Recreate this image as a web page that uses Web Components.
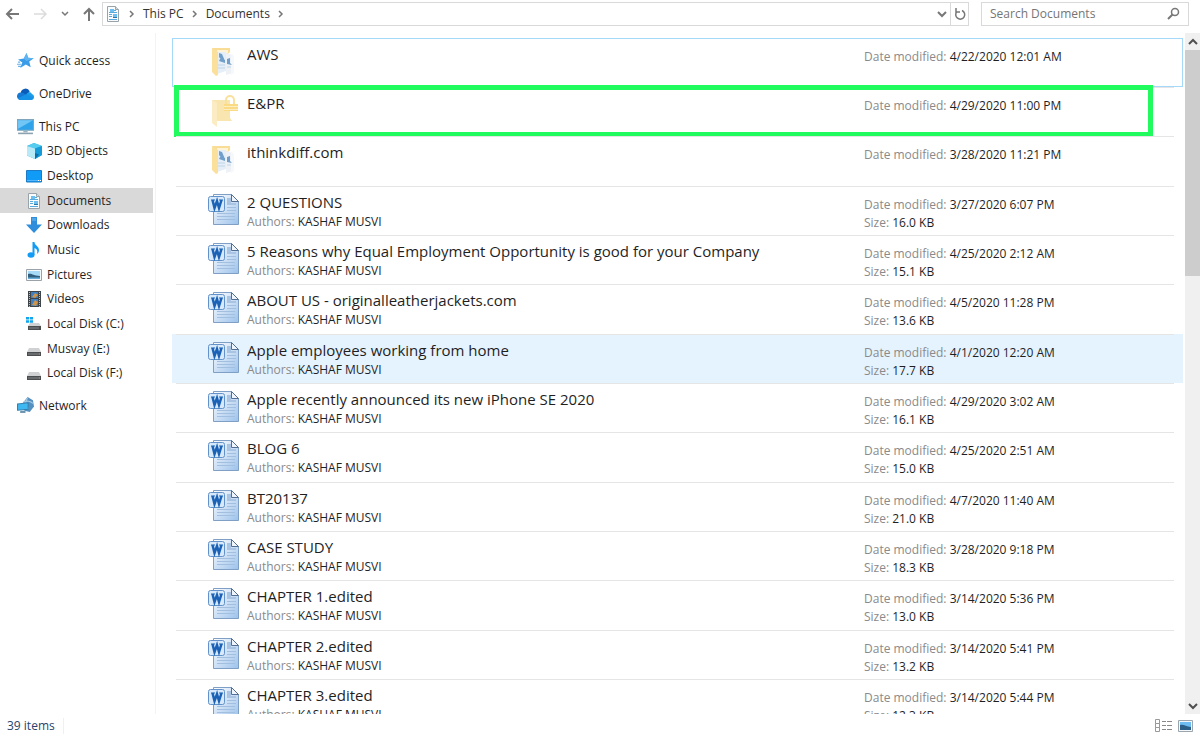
<!DOCTYPE html>
<html lang="en">
<head>
<meta charset="utf-8">
<meta name="viewport" content="width=device-width, initial-scale=1">
<title>Documents</title>
<style>
  * { box-sizing: border-box; }
  body {
    --line: #e5e5e5;
    --text: #1f1f1f;
    --muted: #8a8a8a;
    margin: 0;
    height: 100vh;
    display: flex;
    flex-direction: column;
    overflow: hidden;
    background: #fff;
    color: var(--text);
    font: 12px/18px "Open Sans", "Noto Sans", sans-serif;
  }
  main {
    flex: 1;
    min-height: 0;
    display: flex;
    margin-top: 7px;
  }
</style>
</head>
<body>
<address-bar></address-bar>
<main>
  <side-nav>
    <nav-item icon="star">Quick access</nav-item>
    <nav-item icon="cloud">OneDrive</nav-item>
    <nav-group>
      <nav-item icon="pc">This PC</nav-item>
      <nav-item icon="cube" child>3D Objects</nav-item>
      <nav-item icon="desktop" child>Desktop</nav-item>
      <nav-item icon="doc" child current>Documents</nav-item>
      <nav-item icon="download" child>Downloads</nav-item>
      <nav-item icon="music" child>Music</nav-item>
      <nav-item icon="picture" child>Pictures</nav-item>
      <nav-item icon="video" child>Videos</nav-item>
      <nav-item icon="windisk" child>Local Disk (C:)</nav-item>
      <nav-item icon="disk" child>Musvay (E:)</nav-item>
      <nav-item icon="disk" child>Local Disk (F:)</nav-item>
    </nav-group>
    <nav-item icon="network">Network</nav-item>
  </side-nav>
  <file-list></file-list>
  <scroll-bar></scroll-bar>
</main>
<status-bar>39 items</status-bar>

<script>
const ICONS = {
  star: `<svg viewBox="0 0 16 16"><path d="M9 1l1.500 4.500 5.300.3-4.300 3.200 1.400 5.400-4.600-2.600L3 15l2-5.200L1 7l5.400-1z" fill="#3a9be8"/><path d="M9 1l1.500 4.500 5.300.3-7 2.700L6.400 6z" fill="#5fb4f2"/><path d="M0 11.500h4M1 13.500h3M1 9.500h2" stroke="#66b3ec"/></svg>`,
  cloud: `<svg viewBox="0 0 16 16"><path d="M3.500 7A4.500 4.500 0 0 1 12 6l-4 5z" fill="#0a5cb8"/><path d="M3.500 7C1.500 7 0 8.500 0 10.500S1.500 14 3.500 14L10 10 6 7.500z" fill="#1478d4"/><path d="M9 8.500C10 6.500 13 6 14 8.500c3 1 2.500 5-.5 5.500z" fill="#1b9de8"/><path d="M1 12.500L9 8.500l6.500 3.500c0 1-1 2-2.500 2H3.500c-1 0-2-.5-2.500-1.500z" fill="#1591e5"/></svg>`,
  pc: `<svg viewBox="0 0 16 16"><path d="M.5 1.500h15v10H.5z" fill="#2fa3ea" stroke="#7fa6bd"/><path d="M1 2h14L1 10z" fill="#72c6f5"/><path d="M6 12h4v1.500H6z" fill="#9db2bf"/><path d="M1 14.500h14" stroke="#8ba2b0" stroke-width="1.500"/></svg>`,
  cube: `<svg viewBox="0 0 16 16"><path d="M8 0l8 3v9l-7 4-8-3.500V3z" fill="#28aee4"/><path d="M8 0l8 3-7 2.500L1 3z" fill="#56ccef"/><path d="M1 3l8 2.500V16l-8-3.500z" fill="#b8e9f6"/><path d="M9 5.500L16 3v9l-7 4z" fill="#159bd8"/><path d="M9 10l4 1.500-4 4.500z" fill="#0b6fab"/></svg>`,
  desktop: `<svg viewBox="0 0 16 16"><path d="M.5 2.500h15v11.500H.5z" fill="#109bf7" stroke="#1c7bc4"/><path d="M1 12.500h14" stroke="#55b8ff"/><path d="M12 12.500h1M14 12.500h1" stroke="#fff"/></svg>`,
  doc: `<svg viewBox="0 0 16 16"><path d="M2.500.5h8l3 3v12h-11z" fill="#f9fbfc" stroke="#99a4aa"/><path d="M10.500.5v3h3" fill="#d5dce0" stroke="#99a4aa"/><path d="M5 3h4v4H5zM8 8h4v4H8z" fill="#6cbff0"/><path d="M4 6.500h8M4 8.500h3M4 10.500h3M4 13.500h8M9 4.500h2" stroke="#5aa9dc"/><path d="M8 11.500h4" stroke="#2874aa"/></svg>`,
  download: `<svg viewBox="0 0 16 16"><path d="M5 0h6v7.500h5L8 16 0 7.500h5z" fill="#2f8edb"/><path d="M6 1h4v3H6z" fill="#51a5e6"/></svg>`,
  music: `<svg viewBox="0 0 16 16"><ellipse cx="5" cy="13" rx="3.500" ry="2.800" fill="#149cf4"/><path d="M6.500 0h2c0 3.500 4.500 4 4.500 8 0 2-1 3-2 4 1-4-.5-5-2.500-6v7h-2z" fill="#149cf4"/></svg>`,
  picture: `<svg viewBox="0 0 16 16"><path d="M.5 2.500h15v11H.5z" fill="#f5f7f9" stroke="#9aa2aa"/><path d="M2 4h12v8H2z" fill="#a6daf7"/><path d="M2 7c4-1 5 2 12 2v3H2z" fill="#315f7e"/><path d="M2 10.500h12V12H2z" fill="#6aaedb"/></svg>`,
  video: `<svg viewBox="0 0 16 16"><path d="M2 0h13v16H2z" fill="#3d444a"/><path d="M5 1h7v6H5zM5 8h7v7H5z" fill="#3d7fc4"/><path d="M6 6l3-4 3 2-3 3zM6 14l3-5 3 2-2 4z" fill="#d09448"/><path d="M3.500 1v15M13.500 1v15" stroke="#b9bec2" stroke-dasharray="1 1"/></svg>`,
  disk: `<svg viewBox="0 0 16 16"><path d="M3 7h10l2 4H1z" fill="#cfd1d2"/><path d="M1 11h14v4H1z" fill="#4b4d4f"/><path d="M2 13h11" stroke="#85898c"/><path d="M13 13h1" stroke="#77e07a"/></svg>`,
  windisk: `<svg viewBox="0 0 16 16"><path d="M4 7h9l2 3H2z" fill="#cfd1d2"/><path d="M2 10h13v4H2z" fill="#4b4d4f"/><path d="M3 12h10" stroke="#85898c"/><path d="M0 1h3v2.500H0zM3.700 1H7v2.500H3.700zM0 4.200h3v2.600H0zM3.700 4.200H7v2.600H3.700z" fill="#12a5ee"/></svg>`,
  network: `<svg viewBox="0 0 16 16"><path d="M10 0l5 3 1 6-4 5-5-1-2-7z" fill="#5590c0"/><path d="M10 1c-3 3-2 7 1 10M6 5c3-2 7-1 9 1" stroke="#a9cde6" fill="none"/><path d="M.5 6.500l10-1v6l-10 1z" fill="#3fb8f2" stroke="#3580b0"/><path d="M3 13h5v2H3z" fill="#6b93ad"/></svg>`,
  folder: `<svg viewBox="0 0 31 34"><path d="M4 3h18v4l-3 3H8z" fill="#f9dc95"/><path d="M9 5h11v3H9z" fill="#fff4d8"/><path d="M9 7h9v19l-9 3z" fill="#e6eff7"/><path d="M18 8l7 2v18l-7 2z" fill="#eef2f6"/><path d="M23 10l3 1v17l-3 2z" fill="#f7f8f9"/><path d="M11 8l3 1 3 7-2 1-4-5zM12 14l5 1v3l-6-2zM19 14l3-1v5l2 2-5-1z" fill="#6f9fca"/><path d="M10 20h7M19 22h4M10 23h7" stroke="#c0d5e8"/><path d="M4 3l6 4v23l-2 1-4-4z" fill="#fbe09c"/></svg>`,
  locked: `<svg viewBox="0 0 31 34"><path d="M4 6h18v18l2 3H10l-6 1z" fill="#f9e5b0"/><path d="M4 6l5 3v24l-5-4z" fill="#fbecc4"/><path d="M18 11V6a4 4 0 0 1 8 0v5" fill="none" stroke="#f9e19b" stroke-width="2"/><path d="M16 10h14v7H16z" fill="#fadb83"/><path d="M16 12.500h14M16 15.500h14" stroke="#fdeec2"/></svg>`,
  word: `<svg viewBox="0 0 31 34"><defs><linearGradient id="p" x1="0" y1="0" x2="1" y2="1"><stop stop-color="#fff"/><stop offset="1" stop-color="#9cc2ec"/></linearGradient></defs>
    <path d="M5.500 1.500h18l7 7v23h-25z" fill="url(#p)" stroke="#7f9fc4"/><path d="M23.500 1.500v7h7z" fill="#eef5fc" stroke="#526f93"/>
    <path d="M19 5h4v5h5v2h-9z" fill="#a9c3e2"/><path d="M19 14.500h9M19 17.500h9M9 20.500h18M9 23.500h18M9 26.500h18" stroke="#a3bfe0"/>
    <rect x=".5" y="3.500" width="16" height="15" rx="2" fill="#d7e9fa" stroke="#6292c9"/><path d="M4.500 7l2 8 2.500-7 2 7 2.500-8" fill="none" stroke="#1b62b7" stroke-width="2.500"/><path d="M3 7h4M11 7h4" stroke="#1b62b7"/></svg>`
};

const FILES = [
  { name: "AWS", icon: "folder", date: "4/22/2020 12:01 AM", state: "selected" },
  { name: "E&amp;PR", icon: "locked", date: "4/29/2020 11:00 PM", state: "marked" },
  { name: "ithinkdiff.com", icon: "folder", date: "3/28/2020 11:21 PM" },
  { name: "2 QUESTIONS", date: "3/27/2020 6:07 PM", size: "16.0 KB" },
  { name: "5 Reasons why Equal Employment Opportunity is good for your Company", date: "4/25/2020 2:12 AM", size: "15.1 KB" },
  { name: "ABOUT US - originalleatherjackets.com", date: "4/5/2020 11:28 PM", size: "13.6 KB" },
  { name: "Apple employees working from home", date: "4/1/2020 12:20 AM", size: "17.7 KB", state: "hovered" },
  { name: "Apple recently announced its new iPhone SE 2020", date: "4/29/2020 3:02 AM", size: "16.1 KB" },
  { name: "BLOG 6", date: "4/25/2020 2:51 AM", size: "15.0 KB" },
  { name: "BT20137", date: "4/7/2020 11:40 AM", size: "21.0 KB" },
  { name: "CASE STUDY", date: "3/28/2020 9:18 PM", size: "18.3 KB" },
  { name: "CHAPTER 1.edited", date: "3/14/2020 5:36 PM", size: "13.0 KB" },
  { name: "CHAPTER 2.edited", date: "3/14/2020 5:41 PM", size: "13.2 KB" },
  { name: "CHAPTER 3.edited", date: "3/14/2020 5:44 PM", size: "12.3 KB" }
];

class AddressBar extends HTMLElement {
  constructor() {
    super();
    this.attachShadow({ mode: "open" }).innerHTML = `
      <style>
        * { box-sizing: border-box; }
        :host { display: flex; padding: 2px 11px 0 0; }
        button {
          border: 0; padding: 0; background: none; color: #333; font: inherit;
          display: flex; align-items: center; justify-content: center;
        }
        svg { display: block; fill: none; stroke: #777; }
        .history { display: flex; width: 102px; padding: 0 6px 0 4px; justify-content: space-between; }
        .forward svg { stroke: #dcdcdc; }
        .path {
          flex: 1; min-width: 0; display: flex; align-items: center; gap: 8px;
          height: 24px; border: 1px solid #d9d9d9; padding-left: 2px;
        }
        .path .doc svg { width: 16px; height: 16px; stroke: none; }
        .tools { display: flex; align-self: stretch; gap: 3px; margin-left: auto; }
        .refresh { width: 18px; border-left: 1px solid #d9d9d9; }
        .search {
          display: flex; align-items: center; width: 208px; height: 24px;
          margin-left: 12px; padding: 0 8px; border: 1px solid #d9d9d9;
        }
        input {
          flex: 1; min-width: 0; border: 0; outline: 0; padding: 0;
          font: inherit; background: none;
        }
        input::placeholder { color: #757575; opacity: 1; }
      </style>
      <div class="history">
        <button aria-label="Back"><svg width="16" height="16"><path d="M15 8H3M8 3L3 8l5 5" stroke-width="2"/></svg></button>
        <button class="forward" aria-label="Forward"><svg width="16" height="16"><path d="M1 8h12M8 3l5 5-5 5" stroke-width="1.500"/></svg></button>
        <button aria-label="Recent locations"><svg width="8" height="8"><path d="M1 2l3 3 3-3" stroke-width="1.500"/></svg></button>
        <button aria-label="Up"><svg width="14" height="16"><path d="M7 15V3M2 8l5-5 5 5" stroke-width="2"/></svg></button>
      </div>
      <div class="path">
        <button class="doc" aria-label="Documents">${ICONS.doc}</button>
        <svg width="6" height="8"><path d="M1 1l3 3-3 3" stroke-width="1.500"/></svg>
        <button>This PC</button>
        <svg width="6" height="8"><path d="M1 1l3 3-3 3" stroke-width="1.500"/></svg>
        <button>Documents</button>
        <svg width="6" height="8"><path d="M1 1l3 3-3 3" stroke-width="1.500"/></svg>
        <div class="tools">
          <button aria-label="Previous locations"><svg width="10" height="8"><path d="M1 2l4 4 4-4" stroke-width="2"/></svg></button>
          <button class="refresh" aria-label="Refresh"><svg width="12" height="14"><path d="M8 3.500a4.500 4.500 0 1 1-5 1M2 1v4h4" stroke-width="1.500"/></svg></button>
        </div>
      </div>
      <div class="search">
        <input type="text" placeholder="Search Documents" aria-label="Search Documents">
        <svg width="14" height="14"><circle cx="9" cy="5" r="3.500" stroke-width="1.500"/><path d="M6.500 7.500L2 12" stroke-width="2"/></svg>
      </div>
    `;
  }
}

class SideNav extends HTMLElement {
  constructor() {
    super();
    this.attachShadow({ mode: "open" }).innerHTML = `
      <style>
        :host { display: block; flex: none; width: 156px; box-sizing: border-box; border-right: 1px solid #f3f3f3; }
        nav { display: flex; flex-direction: column; gap: 8px; padding: 15px 2px 0 0; }
      </style>
      <nav><slot></slot></nav>
    `;
  }
}

class NavGroup extends HTMLElement {
  constructor() {
    super();
    this.attachShadow({ mode: "open" }).innerHTML = `
      <style>
        :host { display: grid; grid-auto-rows: 25px 24px 25px; }
      </style>
      <slot></slot>
    `;
  }
}

class NavItem extends HTMLElement {
  connectedCallback() {
    this.attachShadow({ mode: "open" }).innerHTML = `
      <style>
        :host { display: block; }
        a {
          display: flex; align-items: center; gap: 5px; box-sizing: border-box;
          height: 100%; min-height: 24px; padding-left: 17px;
          color: inherit; text-decoration: none; white-space: nowrap;
        }
        :host(:not([child])) a { min-height: 25px; }
        :host([child]) a { padding-left: 26px; }
        :host([current]) { background: #d9d9d9; }
        svg { display: block; width: 17px; height: 17px; }
        :host([child]) svg { width: 16px; height: 16px; }
      </style>
      <a href="#">${ICONS[this.getAttribute("icon")]}<slot></slot></a>
    `;
  }
}

class FileItem extends HTMLElement {
  set file(file) {
    this._file = file;
    this.render();
  }

  render() {
    const { name, icon = "word", date, size, state } = this._file;
    if (state) this.setAttribute(state, "");
    this.attachShadow({ mode: "open" }).innerHTML = `
      <style>
        * { box-sizing: border-box; }
        :host { display: block; position: relative; }
        .row {
          display: grid; grid-template-columns: 31px minmax(0, 1fr) 310px; column-gap: 8px;
          height: 100%; margin: 0 9px 0 4px; padding-left: 32px;
          border-top: 1px solid var(--line); white-space: nowrap;
        }
        :host([selected]) { box-shadow: inset 0 0 0 1px #a6d8fa; }
        :host([selected]) .row { border-top-color: transparent; }
        :host([hovered]) { background: #e5f3ff; }
        .icon { padding-top: 6px; }
        svg { display: block; width: 31px; height: 34px; }
        .name { padding-top: 5px; }
        h2 { margin: 0; font-size: 15px; line-height: 21px; font-weight: 400; overflow: hidden; text-overflow: ellipsis; }
        p { margin: 0; line-height: 18px; }
        .details { padding-top: 9px; }
        span { color: var(--muted); }
        .mark { position: absolute; inset: -2px 30px -1px 2px; border: 5px solid #22fb5e; }
      </style>
      <div class="row">
        <div class="icon">${ICONS[icon]}</div>
        <div class="name">
          <h2>${name}</h2>
          ${size ? `<p><span>Authors:</span> KASHAF MUSVI</p>` : ""}
        </div>
        <div class="details">
          <p><span>Date modified:</span> ${date}</p>
          ${size ? `<p><span>Size:</span> ${size}</p>` : ""}
        </div>
      </div>
      ${state === "marked" ? `<div class="mark"></div>` : ""}
    `;
  }
}

class FileList extends HTMLElement {
  constructor() {
    super();
    this.attachShadow({ mode: "open" }).innerHTML = `
      <style>
        :host {
          flex: 1; min-width: 0; overflow: hidden; padding: 5px 2px 0 16px;
          display: grid; grid-auto-rows: 49px 49px 50px; align-content: start;
        }
      </style>
    `;
    FILES.forEach((file) => {
      const item = document.createElement("file-item");
      item.file = file;
      this.shadowRoot.appendChild(item);
    });
  }
}

class ScrollBar extends HTMLElement {
  constructor() {
    super();
    this.attachShadow({ mode: "open" }).innerHTML = `
      <style>
        :host { display: flex; flex-direction: column; flex: none; width: 15px; background: #f0f0f0; }
        button { border: 0; padding: 0; height: 17px; background: none; display: grid; place-items: center; }
        svg { fill: none; stroke: #505050; stroke-width: 2; }
        .track { flex: 1; }
        .thumb { height: 35%; background: #cdcdcd; }
      </style>
      <button aria-label="Scroll up"><svg width="10" height="8"><path d="M1 6l4-4 4 4"/></svg></button>
      <div class="track"><div class="thumb"></div></div>
      <button aria-label="Scroll down"><svg width="10" height="8"><path d="M1 2l4 4 4-4"/></svg></button>
    `;
  }
}

class StatusBar extends HTMLElement {
  constructor() {
    super();
    this.attachShadow({ mode: "open" }).innerHTML = `
      <style>
        :host { display: flex; align-items: center; height: 24px; padding: 0 7px; color: #26456e; }
        .count { padding-right: 8px; border-right: 1px solid #f0f0f0; line-height: 16px; }
        .views { display: flex; align-items: center; gap: 6px; margin-left: auto; }
        button { border: 0; padding: 0; background: none; }
        svg { display: block; }
      </style>
      <div class="count"><slot></slot></div>
      <div class="views">
        <button aria-label="Details view"><svg width="17" height="14" fill="none"><path d="M.5.500h4v4h-4zM.5 4.500h4v4h-4zM.5 8.500h4v4h-4z" stroke="#999"/><path d="M7 2.500h4M12 2.500h5M7 6.500h4M12 6.500h5M7 10.500h4M12 10.500h5" stroke="#888"/></svg></button>
        <button aria-label="Large icons view"><svg width="15" height="12"><path d="M.5.500h14v11H.5z" fill="#f4f8fb" stroke="#9aa5ad"/><path d="M2 2h11v8H2z" fill="#6dbdf2"/><path d="M2 5c4-1 6 2 11 2v3H2z" fill="#2c5f88"/></svg></button>
      </div>
    `;
  }
}

customElements.define("address-bar", AddressBar);
customElements.define("nav-item", NavItem);
customElements.define("nav-group", NavGroup);
customElements.define("side-nav", SideNav);
customElements.define("file-item", FileItem);
customElements.define("file-list", FileList);
customElements.define("scroll-bar", ScrollBar);
customElements.define("status-bar", StatusBar);
</script>
</body>
</html>
